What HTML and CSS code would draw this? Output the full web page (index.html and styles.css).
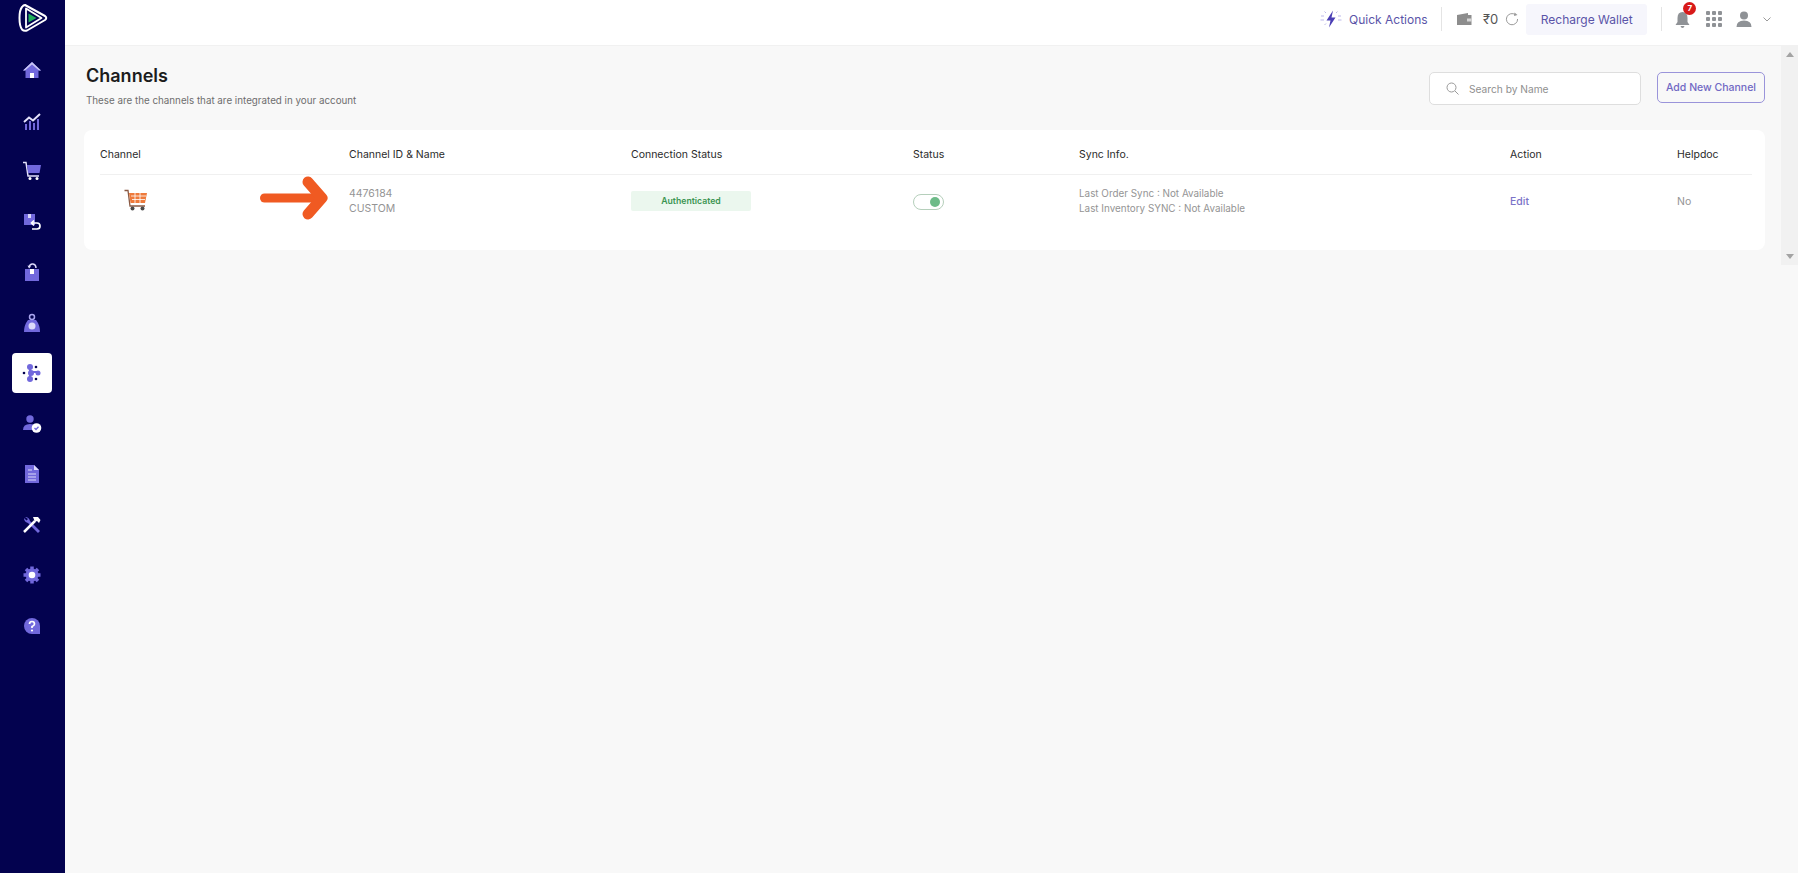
FILE: index.html
```html
<!DOCTYPE html>
<html lang="en">
<head>
  <meta charset="UTF-8">
  <title>Channels</title>
  <link rel="stylesheet" href="styles.css">
</head>
<body>

<aside class="sidebar">
  <div class="logo">
    <svg width="30" height="30" viewBox="0 0 30 30" fill="none">
      <path d="M7 2 27 13Q29.500 15 27 17L9 27.500Q6 28.500 4 26.500Q1.500 23 1.500 15T4 4Q5.500 2 7 2Z" stroke="#fff" stroke-width="2" stroke-linejoin="round"/>
      <path d="M8 5.500V24.500L23.500 15Z" stroke="#fff" stroke-width="1.800" stroke-linejoin="round"/>
      <path d="M10.500 10.500 18.500 15 10.500 19.500Z" fill="#1fae5b"/>
    </svg>
  </div>
  <nav class="nav">
    <a class="nav-item">
      <svg width="20" height="20" viewBox="0 0 20 20"><path d="M10 2 1 10.500H3.500V18H16.500V10.500H19Z" fill="#7168dc"/><path d="M10 2 1 10.500H3L10 4.500 17 10.500H19Z" fill="#c9c6f5"/><rect x="8" y="13" width="4" height="5" fill="#fff"/></svg>
    </a>
    <a class="nav-item">
      <svg width="20" height="20" viewBox="0 0 20 20"><path d="M2 11 7 6.500 11 9.500 18 3" fill="none" stroke="#e4e2fb" stroke-width="2"/><path d="M3 13h2v6H3zM7 10h2v9H7zM11 12h2v7h-2zM15 8h2v11h-2z" fill="#7168dc"/></svg>
    </a>
    <a class="nav-item">
      <svg width="20" height="20" viewBox="0 0 20 20"><path d="M1 1.500H4L6 15H17" fill="none" stroke="#e4e2fb" stroke-width="1.500"/><path d="M5 4H19L17.500 12H6Z" fill="#7168dc"/><circle cx="8" cy="17.500" r="1.500" fill="#fff"/><circle cx="15" cy="17.500" r="1.500" fill="#fff"/></svg>
    </a>
    <a class="nav-item">
      <svg width="20" height="20" viewBox="0 0 20 20"><path d="M2 2H13V13H2Z" fill="#7168dc"/><path d="M6 2H9V6H6Z" fill="#dcdafa"/><path d="M12 8.500 9.500 11 12 13.500M10 11H15Q18 11 18 14T15 17H10" fill="none" stroke="#fff" stroke-width="1.700"/></svg>
    </a>
    <a class="nav-item">
      <svg width="20" height="20" viewBox="0 0 20 20"><path d="M3 7H17V19H3Z" fill="#7168dc"/><rect x="8" y="7" width="4" height="5" fill="#fff"/><path d="M7 5Q8 1.500 11 2T14 6" fill="none" stroke="#dcdafa" stroke-width="1.500"/><path d="M5.500 3.500 7 6.500 9 4.500Z" fill="#dcdafa"/></svg>
    </a>
    <a class="nav-item">
      <svg width="20" height="20" viewBox="0 0 20 20"><path d="M6 7H14Q18 12 18 19H2Q2 12 6 7Z" fill="#7168dc"/><circle cx="10" cy="4" r="2.500" fill="none" stroke="#a9a4ee" stroke-width="1.500"/><circle cx="10" cy="13" r="3.500" fill="#dcdafa"/></svg>
    </a>
    <a class="nav-item active">
      <svg width="20" height="20" viewBox="0 0 20 20"><path d="M8 3V16M8 9H16" stroke="#7168dc" stroke-width="2"/><circle cx="8" cy="4" r="3" fill="#7168dc"/><circle cx="8" cy="16" r="3" fill="#7168dc"/><circle cx="9" cy="10" r="3" fill="#7168dc"/><circle cx="16" cy="10" r="2.500" fill="#7168dc"/><circle cx="2" cy="10" r="1.300" fill="#03024f"/><circle cx="14" cy="4" r="1.300" fill="#03024f"/><circle cx="14" cy="16" r="1.300" fill="#03024f"/></svg>
    </a>
    <a class="nav-item">
      <svg width="20" height="20" viewBox="0 0 20 20"><circle cx="8" cy="5" r="3.700" fill="#7168dc"/><path d="M1 16Q1 10 8 10T13 16Z" fill="#7168dc"/><circle cx="14.500" cy="14" r="4.800" fill="#fff"/><path d="M12.500 14 14 15.500 16.500 12.800" fill="none" stroke="#7168dc" stroke-width="1.300"/></svg>
    </a>
    <a class="nav-item">
      <svg width="20" height="20" viewBox="0 0 20 20"><path d="M3 1H12L17 6V19H3Z" fill="#7168dc"/><path d="M12 1V6H17Z" fill="#dcdafa"/><path d="M6 6H10M6 10H14M6 13H14M6 16H14" stroke="#dcdafa" stroke-width="1.200"/></svg>
    </a>
    <a class="nav-item">
      <svg width="20" height="20" viewBox="0 0 20 20"><path d="M3 2Q7 2 8 6L18 16 16 18 6 8Q2 7 2 3L4.500 5.500 6 4Z" fill="#7168dc"/><path d="M2 17 13 6" stroke="#fff" stroke-width="2.500"/><path d="M11 2H16L18.500 5 17 8 15 6 13 7Z" fill="#fff"/></svg>
    </a>
    <a class="nav-item">
      <svg width="20" height="20" viewBox="0 0 20 20"><circle cx="10" cy="10" r="6.500" fill="#7168dc"/><path d="M10 1.500V18.500M1.500 10H18.500M4 4 16 16M16 4 4 16" stroke="#7168dc" stroke-width="3.500"/><circle cx="10" cy="10" r="3.300" fill="#fff"/></svg>
    </a>
    <a class="nav-item">
      <svg width="20" height="20" viewBox="0 0 20 20"><path d="M10 2A8 8 0 1 0 10 18H18V10A8 8 0 0 0 10 2Z" fill="#7168dc"/><path d="M7.500 8Q7.500 5.500 10 5.500T12.500 8Q12.500 9.500 10 10.500V12" fill="none" stroke="#fff" stroke-width="1.700"/><circle cx="10" cy="14.500" r="1.100" fill="#fff"/></svg>
    </a>
  </nav>
</aside>

<div class="main">
  <header class="topbar">
    <a class="quick">
      <svg width="22" height="22" viewBox="0 0 22 22"><path d="M13 2.500 6.500 12.500H10.500L9 19.500 15.500 9.500H11.500Z" fill="#4b3fb5"/><path d="M1 8H4M0.500 12H4M18 8H21M18 12H21.500M4.500 3.500 6 5M17.500 3.500 16 5M4.500 17 6 15.500" stroke="#bdb9ea" stroke-width="1"/></svg>
      <span>Quick Actions</span>
    </a>
    <span class="sep sep-left"></span>
    <svg class="wallet" width="16" height="14" viewBox="0 0 16 14"><path d="M1 3 12 1V3H15.500V13H1Z" fill="#8d8d8d"/><rect x="11" y="6.500" width="4.500" height="3" fill="#d6d6d6"/></svg>
    <span class="balance">₹0</span>
    <svg class="refresh" width="14" height="14" viewBox="0 0 14 14" fill="none"><path d="M10.500 2.800A5.600 5.600 0 1 0 12.600 7" stroke="#9a9a9a" stroke-width="1"/><path d="M9.500 0.500 12.500 3 9 4Z" fill="#9a9a9a"/></svg>
    <a class="recharge">Recharge Wallet</a>
    <span class="sep sep-right"></span>
    <div class="bell">
      <svg width="15" height="17" viewBox="0 0 15 17"><path d="M7.500 1Q12.500 1 12.500 7V11L14.500 14H0.500L2.500 11V7Q2.500 1 7.500 1Z" fill="#8f9296"/><path d="M5.500 15H9.500Q9 17 7.500 17T5.500 15Z" fill="#8f9296"/></svg>
      <span class="badge">7</span>
    </div>
    <div class="apps"><i></i><i></i><i></i><i></i><i></i><i></i><i></i><i></i><i></i></div>
    <svg class="user" width="16" height="16" viewBox="0 0 16 16"><circle cx="8" cy="4.500" r="4" fill="#8f9296"/><path d="M0.500 16Q0.500 9.500 8 9.500T15.500 16Z" fill="#8f9296"/></svg>
    <svg class="chevron" width="8" height="5" viewBox="0 0 8 5" fill="none"><path d="M0.500 0.500 4 4 7.500 0.500" stroke="#9a9a9a"/></svg>
  </header>

  <div class="body-row">
    <main class="content">
      <div class="page-head">
        <div>
          <h1>Channels</h1>
          <p>These are the channels that are integrated in your account</p>
        </div>
        <div class="search">
          <svg width="13" height="13" viewBox="0 0 13 13" fill="none"><circle cx="5.500" cy="5.500" r="4.500" stroke="#9a9a9a"/><path d="M9 9 12.500 12.500" stroke="#9a9a9a"/></svg>
          <span>Search by Name</span>
        </div>
        <a class="add-btn">Add New Channel</a>
      </div>

      <section class="card">
        <div class="row row-head">
          <div>Channel</div>
          <div>Channel ID &amp; Name</div>
          <div>Connection Status</div>
          <div>Status</div>
          <div>Sync Info.</div>
          <div>Action</div>
          <div>Helpdoc</div>
        </div>
        <div class="row row-body">
          <div class="cart-cell">
            <svg width="24" height="22" viewBox="0 0 24 22" fill="none">
              <path d="M0.500 1.500H4L6 17H21" stroke="#8a5a44" stroke-width="1.300"/>
              <path d="M5 4H23L21 14H6.500Z" fill="#ee7a3b"/>
              <path d="M7 7H22M8 10.500H21M11 4V14M16 4V14" stroke="#fff" stroke-width="0.800"/>
              <circle cx="8.500" cy="19.500" r="2" fill="#4a4a4a"/>
              <circle cx="18.500" cy="19.500" r="2" fill="#4a4a4a"/>
            </svg>
          </div>
          <div class="two-lines id-lines">4476184<br>CUSTOM</div>
          <div class="status-cell"><span class="auth">Authenticated</span></div>
          <div class="status-cell"><span class="toggle"><i></i></span></div>
          <div class="two-lines">Last Order Sync : Not Available<br>Last Inventory SYNC : Not Available</div>
          <div class="status-cell"><a class="edit">Edit</a></div>
          <div class="status-cell">No</div>
        </div>
        <svg class="arrow" width="68" height="44" viewBox="0 0 68 44" fill="none">
          <path d="M4.500 22H56" stroke="#f05a22" stroke-width="9" stroke-linecap="round"/>
          <path d="M48 6 62 22 48 38" stroke="#f05a22" stroke-width="11" stroke-linecap="round" stroke-linejoin="round"/>
        </svg>
      </section>
    </main>
    <div class="scrollbar">
      <span class="up"></span>
      <span class="down"></span>
    </div>
  </div>
</div>

</body>
</html>
```

FILE: styles.css
```css
* { box-sizing: border-box; }
html, body { height: 100%; }
body {
  margin: 0;
  display: flex;
  height: 873px;
  overflow: hidden;
  background: #f8f8f8;
  color: #1c1c1c;
  font-family: Inter, "Liberation Sans", sans-serif;
  font-size: 11px;
}
a { cursor: pointer; }

/* sidebar */
.sidebar {
  width: 65px;
  flex-shrink: 0;
  background: #03024f;
}
.logo {
  height: 50px;
  padding: 3px 0 0 18px;
}
.nav {
  display: flex;
  flex-direction: column;
  align-items: center;
  padding-right: 1px;
}
.nav-item {
  width: 40px;
  height: 40px;
  margin-bottom: 10.5px;
  border-radius: 4px;
  display: flex;
  align-items: center;
  justify-content: center;
}
.nav-item.active { background: #fff; }

/* top bar */
.main {
  flex: 1;
  min-width: 0;
  display: flex;
  flex-direction: column;
}
.topbar {
  height: 45px;
  flex-shrink: 0;
  background: #fff;
  display: flex;
  align-items: center;
  padding-bottom: 7px;
}
.quick {
  margin-left: 1255px;
  display: flex;
  align-items: center;
  gap: 7px;
  color: #5a54a8;
  font-size: 12px;
  width: 108px;
  white-space: nowrap;
}
.quick svg { flex-shrink: 0; }
.sep {
  width: 1px;
  height: 24px;
  background: #e4e4e4;
}
.sep-left { margin-left: 13px; }
.wallet { margin-left: 14px; }
.balance {
  margin-left: 11px;
  font-size: 13px;
  color: #555;
}
.refresh { margin-left: 7px; }
.recharge {
  margin-left: 7px;
  width: 121px;
  height: 31px;
  display: flex;
  align-items: center;
  justify-content: center;
  background: #f6f6fc;
  color: #5a54a8;
  font-size: 12px;
  border-radius: 3px;
}
.sep-right { margin-left: 14px; }
.bell {
  position: relative;
  margin-left: 13px;
  height: 17px;
}
.badge {
  position: absolute;
  top: -9px;
  left: 8px;
  width: 13px;
  height: 13px;
  border-radius: 50%;
  background: #d81a1a;
  color: #fff;
  font-size: 8px;
  font-weight: 700;
  line-height: 13px;
  text-align: center;
}
.apps {
  margin-left: 16px;
  display: grid;
  grid-template-columns: repeat(3, 3.500px);
  gap: 2.500px;
}
.apps i {
  height: 3.500px;
  background: #8f9296;
  border-radius: 1px;
}
.user { margin-left: 14px; }
.chevron { margin-left: 11px; }

/* page */
.body-row {
  flex: 1;
  display: flex;
  align-items: flex-start;
  min-height: 0;
  border-top: 1px solid #f1f1f1;
}
.content {
  flex: 1;
  min-width: 0;
  padding: 19px 16px 0 19px;
}
.page-head {
  display: flex;
  align-items: flex-start;
  height: 65px;
  padding-left: 2px;
}
.page-head > div:first-child { flex: 1; }
h1 {
  margin: 0;
  font-size: 18px;
  font-weight: 600;
  line-height: 22px;
  color: #1c1c1c;
}
.page-head p {
  margin: 7px 0 0;
  font-size: 9.800px;
  line-height: 14px;
  color: #6e6e6e;
}
.search {
  width: 212px;
  height: 33px;
  margin: 7px 0 0 0;
  display: flex;
  align-items: center;
  gap: 10px;
  padding-left: 16px;
  background: #fff;
  border: 1px solid #dedede;
  border-radius: 5px;
  color: #8f8f8f;
  font-size: 10.200px;
}
.add-btn {
  width: 108px;
  height: 31px;
  margin: 7px 0 0 16px;
  display: flex;
  align-items: center;
  justify-content: center;
  border: 1.500px solid #9a94da;
  border-radius: 5px;
  color: #7169c4;
  font-weight: 500;
  font-size: 10.500px;
  white-space: nowrap;
}

/* table */
.card {
  position: relative;
  height: 120px;
  padding: 0 13px 0 16px;
  background: #fff;
  border-radius: 8px;
}
.row {
  display: grid;
  grid-template-columns: 249px 282px 282px 166px 431px 167px 1fr;
}
.row-head {
  height: 45px;
  align-items: center;
  padding-top: 5px;
  border-bottom: 1px solid #f0f0f0;
  font-size: 10.500px;
  color: #2a2a2a;
}
.row-body {
  padding-top: 11px;
  color: #949494;
  font-size: 10.500px;
}
.two-lines {
  font-size: 9.900px;
  line-height: 15px;
}
.id-lines { font-size: 10.500px; }
.status-cell {
  height: 30px;
  display: flex;
  align-items: center;
}
.cart-cell { padding: 3px 0 0 24px; }
.auth {
  width: 120px;
  height: 20px;
  background: #ebf7ee;
  color: #3c9552;
  font-size: 8.700px;
  font-weight: 600;
  line-height: 20px;
  text-align: center;
  border-radius: 2px;
}
.toggle {
  width: 31px;
  height: 16px;
  padding-right: 3px;
  display: flex;
  align-items: center;
  justify-content: flex-end;
  background: #fff;
  border: 1.500px solid #b5cfbb;
  border-radius: 8px;
  margin-top: 2px;
}
.toggle i {
  width: 10px;
  height: 10px;
  border-radius: 50%;
  background: #6dbb88;
}
.edit {
  color: #7b73c8;
  font-weight: 500;
}
.arrow {
  position: absolute;
  left: 176px;
  top: 46px;
}

/* scrollbar */
.scrollbar {
  width: 17px;
  height: 219px;
  flex-shrink: 0;
  background: #f1f1f1;
  display: flex;
  flex-direction: column;
  justify-content: space-between;
  align-items: center;
  padding: 6px 0;
}
.up, .down {
  width: 0;
  height: 0;
  border-left: 4px solid transparent;
  border-right: 4px solid transparent;
}
.up { border-bottom: 5px solid #a3a3a3; }
.down { border-top: 5px solid #a3a3a3; }
```
